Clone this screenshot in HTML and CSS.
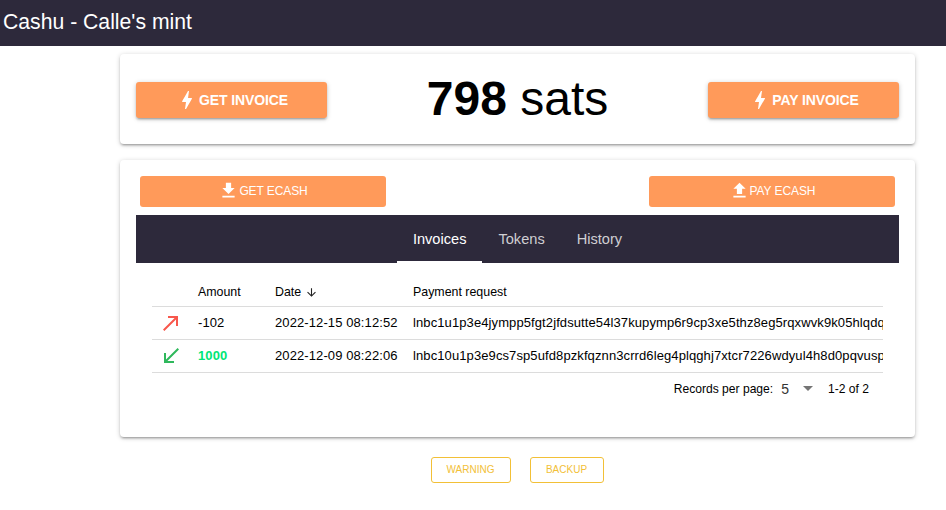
FILE: index.html
```html
<!DOCTYPE html>
<html lang="en">
<head>
<meta charset="utf-8">
<title>Cashu - Calle's mint</title>
<link rel="stylesheet" href="styles.css">
</head>
<body>
<header class="toolbar"><span class="toolbar-title">Cashu - Calle's mint</span></header>
<main class="page">
  <section class="card balance-card">
    <button class="btn btn-raised"><svg class="icon-bolt" viewBox="0 0 24 24"><path d="M11 21h-1l1-7H7.5c-.58 0-.57-.32-.38-.66.19-.34.05-.08.07-.12C8.48 10.94 10.42 7.54 13 3h1l-1 7h3.5c.49 0 .56.33.47.51l-.07.15C12.96 17.55 11 21 11 21z"/></svg>GET INVOICE</button>
    <div class="balance"><strong>798</strong> sats</div>
    <button class="btn btn-raised"><svg class="icon-bolt" viewBox="0 0 24 24"><path d="M11 21h-1l1-7H7.5c-.58 0-.57-.32-.38-.66.19-.34.05-.08.07-.12C8.48 10.94 10.42 7.54 13 3h1l-1 7h3.5c.49 0 .56.33.47.51l-.07.15C12.96 17.55 11 21 11 21z"/></svg>PAY INVOICE</button>
  </section>
  <section class="card wallet-card">
    <div class="ecash-row">
      <button class="btn btn-flat"><svg class="icon-file" viewBox="0 0 24 24"><path d="M19 9h-4V3H9v6H5l7 7 7-7zM5 18v2h14v-2H5z"/></svg>GET ECASH</button>
      <button class="btn btn-flat"><svg class="icon-file" viewBox="0 0 24 24"><path d="M9 16h6v-6h4l-7-7-7 7h4v6zM5 18h14v2H5v-2z"/></svg>PAY ECASH</button>
    </div>
    <nav class="tabs">
      <a class="tab tab-active">Invoices</a>
      <a class="tab">Tokens</a>
      <a class="tab">History</a>
    </nav>
    <div class="table-wrap">
      <table class="table">
        <thead>
          <tr>
            <th class="col-icon"></th>
            <th class="col-amount">Amount</th>
            <th class="col-date">Date <svg class="icon-sort" viewBox="0 0 24 24"><path d="M20 12l-1.41-1.41L13 16.17V4h-2v12.17l-5.58-5.59L4 12l8 8 8-8z"/></svg></th>
            <th>Payment request</th>
          </tr>
        </thead>
        <tbody>
          <tr>
            <td class="col-icon"><svg class="icon-arrow icon-out" viewBox="0 0 24 24"><path d="M9 5v2h6.59L4 18.59 5.41 20 17 8.41V15h2V5z"/></svg></td>
            <td>-102</td>
            <td>2022-12-15 08:12:52</td>
            <td class="cell-request"><div class="clip">lnbc1u1p3e4jympp5fgt2jfdsutte54l37kupymp6r9cp3xe5thz8eg5rqxwvk9k05hlqdqsnp4q0</div></td>
          </tr>
          <tr>
            <td class="col-icon"><svg class="icon-arrow icon-in" viewBox="0 0 24 24"><path d="M20 5.41 18.59 4 7 15.59V9H5v10h10v-2H8.41z"/></svg></td>
            <td class="amount-in">1000</td>
            <td>2022-12-09 08:22:06</td>
            <td class="cell-request"><div class="clip">lnbc10u1p3e9cs7sp5ufd8pzkfqznn3crrd6leg4plqghj7xtcr7226wdyul4h8d0pqvuspqvusp</div></td>
          </tr>
        </tbody>
      </table>
      <div class="pagination">
        <span class="pagination-label">Records per page:</span>
        <span class="pagination-value">5</span>
        <span class="pagination-caret"></span>
        <span>1-2 of 2</span>
      </div>
    </div>
  </section>
  <div class="footer-actions">
    <button class="btn-outline btn-warning">WARNING</button>
    <button class="btn-outline btn-backup">BACKUP</button>
  </div>
</main>
</body>
</html>
```
FILE: styles.css
```css
* { box-sizing: border-box; }
html, body { margin: 0; padding: 0; background: #fff; overflow: hidden; }
body { font-family: "Liberation Sans", Arial, sans-serif; color: #000; width: 946px; height: 510px; }

.toolbar { height: 46px; background: #2d293b; color: #fff; display: flex; align-items: center; padding: 0 3px 2px; }
.toolbar-title { font-size: 21.2px; letter-spacing: 0; }

.page { width: 795px; margin-left: 120px; padding-top: 8px; }

.card { background: #fff; border-radius: 4px; box-shadow: 0 1px 5px rgba(0,0,0,.2), 0 2px 2px rgba(0,0,0,.14), 0 3px 1px -2px rgba(0,0,0,.12); }

.balance-card { height: 90px; padding: 28px 16px 26px; display: flex; justify-content: space-between; align-items: center; }
.balance { font-size: 48px; line-height: 48px; text-align: center; margin-top: -2px; }
.balance strong { font-weight: 700; }

.btn { border: 0; background: #ff9a5a; color: #fff; font-family: inherit; display: inline-flex; align-items: center; justify-content: center; border-radius: 3px; padding: 0; }
.btn-raised { width: 191px; height: 36px; font-size: 14px; font-weight: 700; letter-spacing: -0.1px; box-shadow: 0 1px 5px rgba(0,0,0,.2), 0 2px 2px rgba(0,0,0,.14), 0 3px 1px -2px rgba(0,0,0,.12); }
.btn-flat { width: 246px; height: 31px; font-size: 12px; letter-spacing: -0.1px; padding-bottom: 2px; }
.icon-bolt { width: 24px; height: 24px; fill: #fff; flex: none; }
.icon-file { width: 21px; height: 21px; fill: #fff; flex: none; margin-right: 0; }

.wallet-card { margin-top: 16px; height: 277px; padding: 16px; }
.ecash-row { display: flex; justify-content: space-between; padding: 0 4px; height: 31px; }

.tabs { margin-top: 8px; height: 48px; background: #2d293b; display: flex; justify-content: center; }
.tab { padding: 0 16px; font-size: 14.6px; line-height: 48px; color: rgba(255,255,255,.78); }
.tab-active { color: #fff; border-bottom: 2px solid #fff; }

.table-wrap { padding: 16px 16px 0; }
.table { width: 731px; table-layout: fixed; border-collapse: collapse; font-size: 13px; letter-spacing: 0.1px; }
.table th { font-weight: 400; font-size: 12.4px; letter-spacing: 0; text-align: left; height: 27px; padding: 0 0 0 16px; border-bottom: 1px solid #dcdcdc; color: #000; }
.table td { height: 33px; padding: 0 0 0 16px; border-bottom: 1px solid #dcdcdc; white-space: nowrap; }
.table .col-icon { width: 30px; padding: 0 0 0 7px; }
.col-amount { width: 77px; }
.col-date { width: 138px; }
.clip { width: 470px; overflow: hidden; white-space: nowrap; }
.amount-in { color: #00e676; font-weight: 700; }

.icon-arrow { width: 24px; height: 24px; display: block; }
.icon-out { fill: #f8574c; }
.icon-in { fill: #2fb85c; }
.icon-sort { width: 13px; height: 13px; fill: #222; vertical-align: -3px; margin-left: 0; }

.pagination { display: flex; justify-content: flex-end; align-items: center; height: 32px; font-size: 12.1px; padding-right: 14px; }
.pagination-label { margin-right: 8px; }
.pagination-value { font-size: 14px; margin-right: 14px; color: #333; }
.pagination-caret { width: 0; height: 0; border-left: 5px solid transparent; border-right: 5px solid transparent; border-top: 5px solid #757575; margin-right: 15px; }

.footer-actions { display: flex; justify-content: center; gap: 19px; margin-top: 20px; margin-left: -1px; }
.btn-outline { background: #fff; border: 1px solid #f2c037; color: #f2c037; font-family: inherit; font-size: 10px; height: 26px; border-radius: 3px; padding: 0 0 2px; }
.btn-warning { width: 80px; }
.btn-backup { width: 74px; }
```
